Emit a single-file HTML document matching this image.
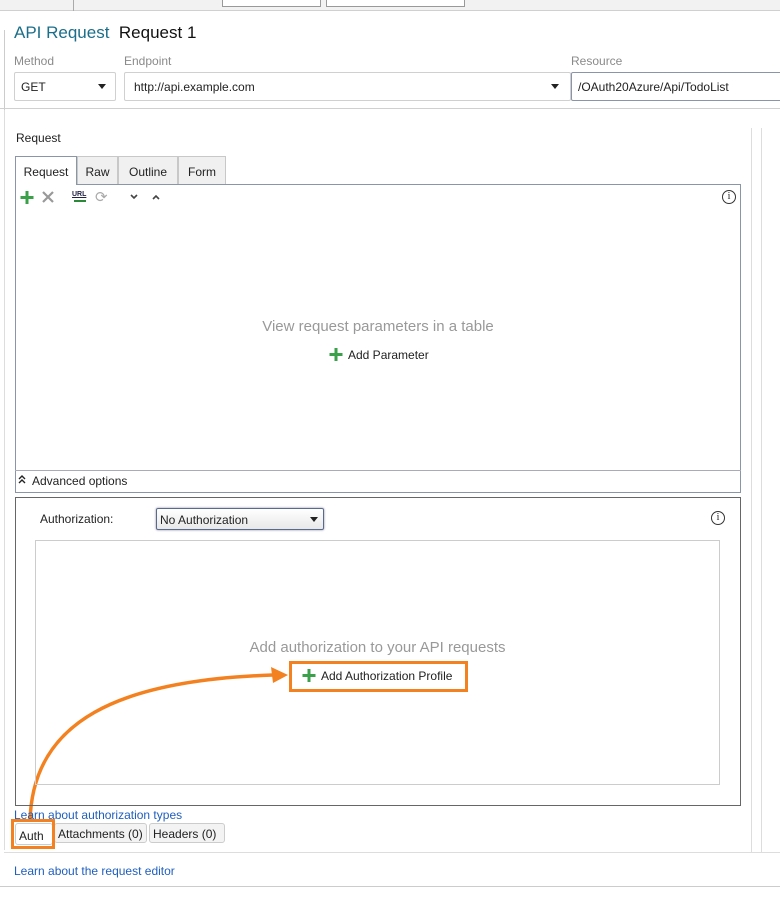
<!DOCTYPE html>
<html><head><meta charset="utf-8"><style>
*{box-sizing:border-box;margin:0;padding:0}
body{width:780px;height:903px;background:#fff;font-family:"Liberation Sans",sans-serif;font-size:12px;color:#222;position:relative;overflow:hidden}
.a{position:absolute}
.lbl{color:#8a8a8a;font-size:12px}
.inp{border:1px solid #d0d0d0;border-radius:2px;background:#fff;height:29px;padding:7px 0 0 6px;font-size:12px}
.tri{position:absolute;width:0;height:0;border-left:4px solid transparent;border-right:4px solid transparent;border-top:5px solid #222}
.tab{position:absolute;top:156px;height:28px;border:1px solid #c8c8c8;border-bottom:none;background:#f0f0f0;padding:8px 0 0;text-align:center;font-size:12px}
.link{color:#1f5fbf;font-size:12px}
.btab{position:absolute;top:823px;height:20px;border:1px solid #ccc;border-radius:3px;background:#f3f3f3;font-size:12px;padding:3px 3px 0}
</style></head><body>
<div class="a" style="left:0;top:0;width:780px;height:11px;background:#f2f2f2;border-bottom:1px solid #d0d0d0"></div>
<div class="a" style="left:73px;top:0;width:1px;height:11px;background:#aaa"></div>
<div class="a" style="left:222px;top:0;width:99px;height:7px;border:1px solid #999;border-top:none;background:#fff"></div>
<div class="a" style="left:326px;top:0;width:139px;height:7px;border:1px solid #999;border-top:none;background:#fff"></div>
<div class="a" style="left:4px;top:30px;width:1px;height:120px;background:#ccc"></div>
<div class="a" style="left:14px;top:23px;font-size:17px"><span style="color:#1a6e8a">API Request</span>&nbsp; <span style="color:#111">Request 1</span></div>
<div class="a lbl" style="left:14px;top:54px">Method</div>
<div class="a lbl" style="left:124px;top:54px">Endpoint</div>
<div class="a lbl" style="left:571px;top:54px">Resource</div>
<div class="a inp" style="left:14px;top:72px;width:102px">GET<div class="tri" style="left:83px;top:11px"></div></div>
<div class="a inp" style="left:124px;top:72px;width:447px;padding-left:9px">http://api.example.com<div class="tri" style="left:426px;top:11px"></div></div>
<div class="a inp" style="left:571px;top:72px;width:213px;border-color:#8a96a8">/OAuth20Azure/Api/TodoList</div>
<div class="a" style="left:0;top:108px;width:780px;height:1px;background:#d0d0d0"></div>
<div class="a" style="left:4px;top:110px;width:1px;height:740px;background:#ddd"></div>
<div class="a" style="left:751px;top:128px;width:1px;height:724px;background:#ddd"></div>
<div class="a" style="left:761px;top:128px;width:1px;height:724px;background:#ddd"></div>
<div class="a" style="left:16px;top:131px">Request</div>
<div class="tab" style="left:15px;width:62px;background:#fff;border-color:#8a96a8;height:29px;z-index:2">Request</div>
<div class="tab" style="left:77px;width:41px">Raw</div>
<div class="tab" style="left:118px;width:60px">Outline</div>
<div class="tab" style="left:178px;width:48px">Form</div>
<div class="a" style="left:15px;top:184px;width:726px;height:309px;border:1px solid #8a96a8"></div>
<svg class="a" style="left:0;top:0" width="780" height="903">
<path d="M27 191v13M20.5 197.5h13" stroke="#3aa04a" stroke-width="3"/>
<path d="M43 192l10 10M53 192l-10 10" stroke="#999" stroke-width="2.2"/>
<path d="M131 195l3 3 3-3M153 199l3-3 3 3" fill="none" stroke="#444" stroke-width="1.6"/>
<path d="M336 348v13M329.5 354.5h13" stroke="#3aa04a" stroke-width="3"/>
<path d="M309 669v13M302.5 675.5h13" stroke="#3aa04a" stroke-width="3"/>
<path d="M19 479l3-3 3 3M19 483l3-3 3 3" fill="none" stroke="#222" stroke-width="1.4"/>
<path d="M30 822 C32 720 120 680 273 675" fill="none" stroke="#f4811f" stroke-width="3.5"/>
<path d="M288 675 L271 667 L273 683 Z" fill="#f4811f"/>
</svg>
<div class="a" style="left:72px;top:191px;font-size:7px;font-weight:bold;color:#224;text-decoration:underline">URL</div>
<div class="a" style="left:74px;top:200px;width:12px;height:2px;background:#2a8a3a"></div>
<div class="a" style="left:95px;top:188px;font-size:15px;color:#aaa">⟳</div>
<div class="a" style="left:722px;top:190px;width:14px;height:14px;border:1px solid #333;border-radius:50%;font-size:10px;text-align:center;line-height:12px;font-family:'Liberation Serif',serif">i</div>
<div class="a" style="left:0;top:318px;width:756px;text-align:center;font-size:15px;color:#999">View request parameters in a table</div>
<div class="a" style="left:348px;top:348px">Add Parameter</div>
<div class="a" style="left:15px;top:470px;width:726px;height:1px;background:#aab"></div>
<div class="a" style="left:32px;top:474px;font-size:12px">Advanced options</div>
<div class="a" style="left:15px;top:497px;width:726px;height:309px;border:1px solid #666"></div>
<div class="a" style="left:40px;top:512px">Authorization:</div>
<div class="a" style="left:156px;top:508px;width:168px;height:22px;border:1px solid #5a6a8a;border-radius:2px;background:linear-gradient(#fff,#e8e8e8);padding:4px 3px;box-shadow:0 0 2px #88a">No Authorization<div class="tri" style="left:153px;top:8px"></div></div>
<div class="a" style="left:711px;top:511px;width:14px;height:14px;border:1px solid #333;border-radius:50%;font-size:10px;text-align:center;line-height:12px;font-family:'Liberation Serif',serif">i</div>
<div class="a" style="left:35px;top:540px;width:685px;height:245px;border:1px solid #ccc"></div>
<div class="a" style="left:35px;top:639px;width:685px;text-align:center;font-size:15px;color:#999">Add authorization to your API requests</div>
<div class="a" style="left:289px;top:661px;width:179px;height:31px;border:3px solid #f4811f"></div>
<div class="a" style="left:321px;top:669px">Add Authorization Profile</div>
<div class="a link" style="left:14px;top:808px">Learn about authorization types</div>
<div class="btab" style="left:15px;width:38px;background:#fff;padding-top:5px;height:22px">Auth</div>
<div class="btab" style="left:54px;width:93px">Attachments (0)</div>
<div class="btab" style="left:149px;width:76px">Headers (0)</div>
<div class="a" style="left:11px;top:819px;width:44px;height:30px;border:3px solid #f4811f"></div>
<div class="a" style="left:4px;top:852px;width:776px;height:1px;background:#ddd"></div>
<div class="a link" style="left:14px;top:864px">Learn about the request editor</div>
<div class="a" style="left:0;top:886px;width:780px;height:1px;background:#ccc"></div>
</body></html>
